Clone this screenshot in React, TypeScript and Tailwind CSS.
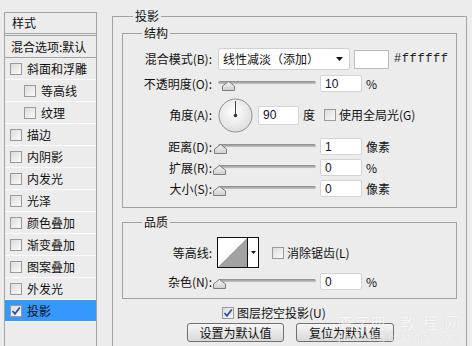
import React from "react";

const font = { fontFamily: '"Noto Sans CJK SC", "Noto Sans", sans-serif' };

function Check({ checked = false }: { checked?: boolean }) {
  return (
    <div className="w-[12px] h-[12px] border border-[#9a9a9a] bg-gradient-to-br from-[#dcdcdc] to-[#fafafa] flex items-center justify-center shrink-0">
      {checked && (
        <svg width="10" height="10" viewBox="0 0 10 10">
          <path d="M1.5 5 L4 7.8 L8.8 1.5" stroke="#2b4fa8" strokeWidth="1.8" fill="none" />
        </svg>
      )}
    </div>
  );
}

function Thumb() {
  return (
    <svg width="13" height="10" viewBox="0 0 13 10">
      <defs>
        <linearGradient id="tg" x1="0" y1="0" x2="0" y2="1">
          <stop offset="0" stopColor="#f4f4f4" />
          <stop offset="1" stopColor="#cfcfcf" />
        </linearGradient>
      </defs>
      <polygon points="6.5,0.5 12.5,5 12.5,9.5 0.5,9.5 0.5,5" fill="url(#tg)" stroke="#7d7d7d" />
    </svg>
  );
}

function Slider({ pos }: { pos: number }) {
  return (
    <div className="relative w-[106px] h-[17px] shrink-0">
      <div className="absolute left-[4px] top-[6px] w-[98px] h-[4px] rounded-[2px] bg-gradient-to-b from-[#8a8a8a] to-[#c8c8c8] border-b border-[#e8e8e8]" />
      <div className="absolute top-[6px]" style={{ left: pos }}>
        <Thumb />
      </div>
    </div>
  );
}

function Input({ value, w = 42, h = 17 }: { value: string; w?: number; h?: number }) {
  return (
    <div
      className="bg-white border border-[#d4d4d4] rounded-[2px] flex items-center pl-[4px] text-[12px] leading-none text-[#101030] shrink-0"
      style={{ width: w, height: h, fontFamily: '"Liberation Sans", sans-serif' }}
    >
      {value}
    </div>
  );
}

function Label({ children }: { children: React.ReactNode }) {
  return <div className="w-[89px] shrink-0 text-right text-[12px] leading-none text-[#111]">{children}</div>;
}

const navRows: { text: string; indent?: boolean; checked?: boolean; active?: boolean }[] = [
  { text: "斜面和浮雕" },
  { text: "等高线", indent: true },
  { text: "纹理", indent: true },
  { text: "描边" },
  { text: "内阴影" },
  { text: "内发光" },
  { text: "光泽" },
  { text: "颜色叠加" },
  { text: "渐变叠加" },
  { text: "图案叠加" },
  { text: "外发光" },
  { text: "投影", checked: true, active: true },
];

export default function App() {
  return (
    <div className="relative w-[472px] h-[346px] bg-[#ececec] flex overflow-hidden text-[#111]" style={font}>
      {/* Left panel */}
      <div className="ml-[4px] mt-[12px] w-[93px] h-[340px] border border-[#a3a3a3] flex flex-col shrink-0">
        <div className="h-[21px] flex items-center pl-[7px] text-[12px] border-b border-[#a3a3a3]">样式</div>
        <div className="h-[2px] border-b border-[#a3a3a3]" />
        <div className="h-[22px] flex items-center pl-[6px] text-[12px] border-b border-[#a3a3a3] whitespace-nowrap">
          混合选项:默认
        </div>
        {navRows.map((r, i) => (
          <div
            key={i}
            className={
              "h-[22px] flex items-center text-[12px] border-b border-[#fafafa] " +
              (r.indent ? "pl-[19px] " : "pl-[5px] ") +
              (r.active ? "bg-[#3399ff]" : "")
            }
          >
            <Check checked={r.checked} />
            <span className="ml-[5px]">{r.text}</span>
          </div>
        ))}
      </div>

      {/* Right: outer group 投影 */}
      <div className="relative ml-[15px] mt-[16px] w-[355px] h-[340px] border border-[#a3a3a3] pl-[9px] pt-[16px] shrink-0">
        <span className="absolute left-[20px] top-[-8px] px-[2px] bg-[#ececec] text-[12px] leading-[14px]">投影</span>

        {/* 结构 */}
        <div className="relative w-[335px] h-[175px] border border-[#a3a3a3] pt-[14px] flex flex-col">
          <span className="absolute left-[19px] top-[-8px] px-[2px] bg-[#ececec] text-[12px] leading-[14px]">结构</span>

          <div className="h-[22px] flex items-center">
            <Label>混合模式(B):</Label>
            <div className="ml-[6px] w-[132px] h-[22px] bg-white border border-[#d0d0d0] rounded-[3px] flex items-center pl-[4px] pr-[6px] text-[12px] shrink-0">
              <span className="flex-1">线性减淡（添加）</span>
              <svg width="7" height="4" viewBox="0 0 7 4">
                <polygon points="0,0 7,0 3.5,4" fill="#111" />
              </svg>
            </div>
            <div className="ml-[4px] w-[35px] h-[19px] bg-white border border-[#bdbdbd] shrink-0" />
            <span
              className="ml-[5px] text-[12px] tracking-[0.6px] whitespace-nowrap text-[#222]"
              style={{ fontFamily: '"Liberation Mono", monospace' }}
            >
              #ffffff
            </span>
          </div>

          <div className="mt-[5px] h-[17px] flex items-center">
            <Label>不透明度(O):</Label>
            <div className="ml-[2px]">
              <Slider pos={8} />
            </div>
            <Input value="10" />
            <span className="ml-[4px] text-[12px]">%</span>
          </div>

          <div className="mt-[6px] h-[34px] flex items-center">
            <Label>角度(A):</Label>
            <svg className="ml-[6px] shrink-0" width="35" height="35" viewBox="0 0 35 35">
              <defs>
                <radialGradient id="dg" cx="0.45" cy="0.4" r="0.6">
                  <stop offset="0" stopColor="#ffffff" />
                  <stop offset="1" stopColor="#dedede" />
                </radialGradient>
              </defs>
              <circle cx="17.5" cy="17.5" r="16.5" fill="url(#dg)" stroke="#8f8f8f" />
              <line x1="17.5" y1="17.5" x2="17.5" y2="3" stroke="#444" strokeWidth="1" />
              <circle cx="17.5" cy="17.5" r="1.8" fill="#333" />
            </svg>
            <div className="ml-[5px]">
              <Input value="90" w={41} h={19} />
            </div>
            <span className="ml-[4px] text-[12px]">度</span>
            <div className="ml-[9px]">
              <Check />
            </div>
            <span className="ml-[3px] text-[12px]">使用全局光(G)</span>
          </div>

          <div className="mt-[6px] h-[17px] flex items-center">
            <Label>距离(D):</Label>
            <div className="ml-[2px]">
              <Slider pos={0} />
            </div>
            <Input value="1" />
            <span className="ml-[4px] text-[12px]">像素</span>
          </div>

          <div className="mt-[4px] h-[17px] flex items-center">
            <Label>扩展(R):</Label>
            <div className="ml-[2px]">
              <Slider pos={-1} />
            </div>
            <Input value="0" />
            <span className="ml-[4px] text-[12px]">%</span>
          </div>

          <div className="mt-[4px] h-[17px] flex items-center">
            <Label>大小(S):</Label>
            <div className="ml-[2px]">
              <Slider pos={-1} />
            </div>
            <Input value="0" />
            <span className="ml-[4px] text-[12px]">像素</span>
          </div>
        </div>

        {/* 品质 */}
        <div className="relative mt-[14px] w-[335px] h-[77px] border border-[#a3a3a3] pt-[14px] flex flex-col">
          <span className="absolute left-[19px] top-[-8px] px-[2px] bg-[#ececec] text-[12px] leading-[14px]">品质</span>

          <div className="h-[31px] flex items-center">
            <Label>等高线:</Label>
            <div className="ml-[5px] w-[42px] h-[31px] border border-[#111] flex bg-white shrink-0">
              <svg width="29" height="29" viewBox="0 0 29 29" className="shrink-0">
                <polygon points="0,29 29,0 29,29" fill="#a2a2a2" />
              </svg>
              <div className="w-[11px] h-[29px] border-l border-[#111] flex items-center justify-center">
                <svg width="5" height="3" viewBox="0 0 5 3">
                  <polygon points="0,0 5,0 2.5,3" fill="#111" />
                </svg>
              </div>
            </div>
            <div className="ml-[13px]">
              <Check />
            </div>
            <span className="ml-[3px] text-[12px]">消除锯齿(L)</span>
          </div>

          <div className="mt-[5px] h-[17px] flex items-center">
            <Label>杂色(N):</Label>
            <div className="ml-[2px]">
              <Slider pos={-1} />
            </div>
            <Input value="0" />
            <span className="ml-[4px] text-[12px]">%</span>
          </div>
        </div>

        <div className="mt-[7px] ml-[100px] h-[13px] flex items-center">
          <Check checked />
          <span className="ml-[3px] text-[12px]">图层挖空投影(U)</span>
        </div>

        <div className="mt-[4px] ml-[65px] flex gap-[12px]">
          <button className="w-[97px] h-[19px] border border-[#707070] rounded-[3px] bg-gradient-to-b from-[#f6f6f6] to-[#d9d9d9] text-[12px] leading-none flex items-center justify-center">
            设置为默认值
          </button>
          <button className="w-[98px] h-[19px] border border-[#707070] rounded-[3px] bg-gradient-to-b from-[#f6f6f6] to-[#d9d9d9] text-[12px] leading-none flex items-center justify-center">
            复位为默认值
          </button>
        </div>
      </div>

      {/* watermark */}
      <div className="absolute left-[338px] top-[313px] flex flex-col items-start pointer-events-none opacity-60">
        <div className="flex gap-[14px] text-[16px] leading-[18px] text-white" style={{ textShadow: "0 0 1px #bbb" }}>
          <span>查字典</span>
          <span className="tracking-[6px]">教程网</span>
        </div>
        <span className="text-[11px] leading-[12px] text-white" style={{ fontFamily: '"Liberation Sans", sans-serif', textShadow: "0 0 1px #bbb" }}>
          jiaocheng.chazidian.com
        </span>
      </div>
    </div>
  );
}
